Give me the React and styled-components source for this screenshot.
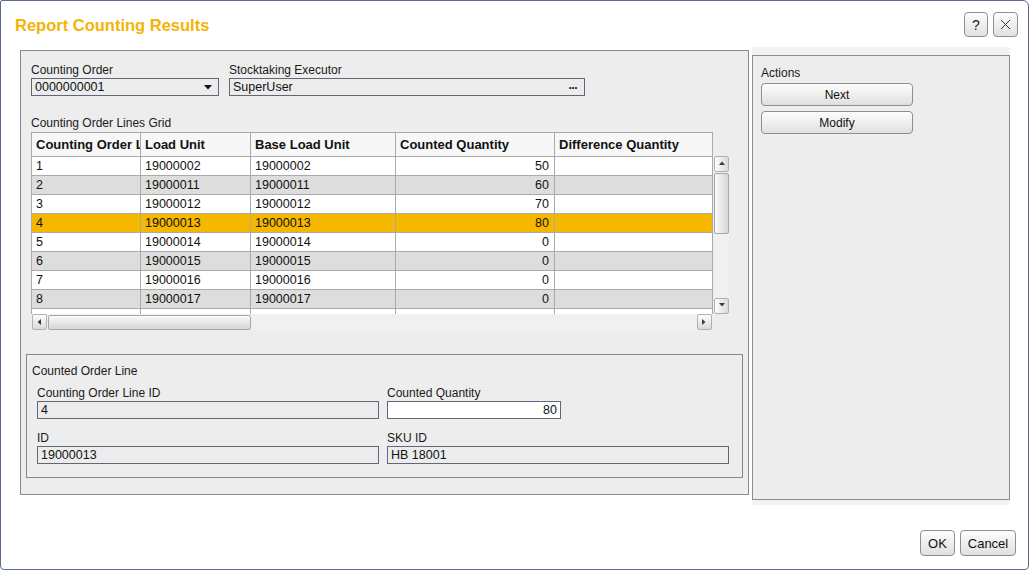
import React from 'react';
import styled, { createGlobalStyle } from 'styled-components';

const GlobalStyle = createGlobalStyle`
  html, body { margin: 0; padding: 0; background: #fff; }
  body {
    font-family: "Liberation Sans", Arial, sans-serif;
    font-size: 12px;
    color: #141414;
  }
  * { box-sizing: border-box; }
`;

// the 9th row is only a sliver in the viewport, so it holds no text
const rows = [
  { id: '1', lu: '19000002', base: '19000002', qty: '50' },
  { id: '2', lu: '19000011', base: '19000011', qty: '60' },
  { id: '3', lu: '19000012', base: '19000012', qty: '70' },
  { id: '4', lu: '19000013', base: '19000013', qty: '80', selected: true },
  { id: '5', lu: '19000014', base: '19000014', qty: '0' },
  { id: '6', lu: '19000015', base: '19000015', qty: '0' },
  { id: '7', lu: '19000016', base: '19000016', qty: '0' },
  { id: '8', lu: '19000017', base: '19000017', qty: '0' },
  { id: '' },
];

const columns = [
  { key: 'id', title: 'Counting Order Line ID', width: 109 },
  { key: 'lu', title: 'Load Unit', width: 110 },
  { key: 'base', title: 'Base Load Unit', width: 145 },
  { key: 'qty', title: 'Counted Quantity', width: 159, align: 'right' },
  { key: 'diff', title: 'Difference Quantity', width: 158 },
];

const Window = styled.div`
  width: 1029px;
  height: 570px;
  border: 1px solid #5b6b8a;
  border-radius: 2px 6px 4px 4px;
  background: #fff;
  display: flex;
  flex-direction: column;
`;

const TitleBar = styled.div`
  height: 46px;
  display: flex;
  align-items: center;
  justify-content: space-between;
  padding: 0 10px 0 14px;
`;

const Title = styled.h1`
  margin: 0;
  font-size: 16.5px;
  font-weight: bold;
  color: #f4b305;
  padding-top: 2px;
`;

const TitleButtons = styled.div`
  display: flex;
  gap: 5px;
  margin-top: 1px;
`;

const SmallButton = styled.button`
  width: ${(p) => p.$width || 24}px;
  height: 25px;
  padding: 0;
  border: 1px solid #8f8f8f;
  border-radius: 4px;
  background: linear-gradient(#fdfdfd, #e1e1e1);
  font-family: inherit;
  font-size: 14px;
  color: #222;
  display: flex;
  align-items: center;
  justify-content: center;
`;

const Body = styled.div`
  display: flex;
  align-items: flex-start;
  padding-left: 19px;
`;

const MainPanel = styled.div`
  margin-top: 3px;
  width: 729px;
  height: 445px;
  border: 1px solid #8c8c8c;
  background: #ededed;
  padding: 12px 5px 0 5px;
`;

const TopSection = styled.div`
  padding-left: 5px;
`;

const FieldRow = styled.div`
  display: flex;
  gap: 10px;
`;

const FieldBlock = styled.div`
  display: flex;
  flex-direction: column;
  width: ${(p) => p.$width || 'auto'};
`;

const Label = styled.div`
  font-size: 12px;
  line-height: 14px;
  color: #1a1a1a;
  margin-bottom: 1px;
  white-space: nowrap;
`;

const Field = styled.div`
  height: 18px;
  width: ${(p) => p.$width || '100%'};
  border: 1px solid #5f687a;
  background: ${(p) => (p.$editable ? '#fff' : '#ececec')};
  padding: 0 3px;
  line-height: 16px;
  font-size: 12.5px;
  color: #111;
  display: flex;
  align-items: center;
  justify-content: ${(p) => (p.$align === 'right' ? 'flex-end' : 'space-between')};
`;

const Dots = styled.span`
  font-weight: bold;
  font-size: 12px;
  letter-spacing: -0.5px;
  margin: -5px 4px 0 0;
`;

const GridLabel = styled(Label)`
  margin-top: 20px;
  margin-bottom: 2px;
`;

const GridFrame = styled.div`
  display: grid;
  grid-template-columns: 682px 16px;
  grid-template-rows: 25px 157px 16px;
`;

const HeaderRow = styled.div`
  display: flex;
  background: #f7f7f7;
  border-top: 1px solid #aaa;
  border-left: 1px solid #aaa;
`;

const HeaderCell = styled.div`
  flex: 0 0 ${(p) => p.$width}px;
  width: ${(p) => p.$width}px;
  border-right: 1px solid #aaa;
  border-bottom: 1px solid #aaa;
  padding: 1px 0 0 4px;
  font-size: 13px;
  font-weight: bold;
  line-height: 22px;
  color: #111;
  white-space: nowrap;
  overflow: hidden;
`;

const GridBody = styled.div`
  overflow: hidden;
  border-left: 1px solid #aaa;
  grid-column: 1;
  grid-row: 2;
`;

const rowBg = (p) => (p.$selected ? '#f5b700' : p.$odd ? '#dddddd' : '#fff');

const Row = styled.div`
  display: flex;
  height: 19px;
  flex-shrink: 0;
  background: ${rowBg};
  border-bottom: 1px solid #aaa;
`;

const Cell = styled.div`
  flex: 0 0 ${(p) => p.$width}px;
  width: ${(p) => p.$width}px;
  border-right: 1px solid #aaa;
  padding: 0 5px 0 4px;
  line-height: 19px;
  font-size: 12.5px;
  color: #111;
  text-align: ${(p) => p.$align || 'left'};
  white-space: nowrap;
  overflow: hidden;
`;

const VScroll = styled.div`
  grid-column: 2;
  grid-row: 2;
  margin: -1px 0 0 1px;
  width: 15px;
  background: #f0f0f0;
  display: flex;
  flex-direction: column;
`;

const HScroll = styled.div`
  grid-column: 1;
  grid-row: 3;
  background: #f0f0f0;
  display: flex;
  align-items: center;
  padding: 0 1px;
`;

const ScrollButton = styled.div`
  width: 15px;
  height: 16px;
  flex-shrink: 0;
  border: 1px solid #b0b0b0;
  border-radius: 2px;
  background: linear-gradient(${(p) => (p.$horizontal ? '180deg' : '90deg')}, #fdfdfd, #dadada);
  display: flex;
  align-items: center;
  justify-content: center;
`;

const VThumb = styled.div`
  height: 61px;
  margin-top: 1px;
  border: 1px solid #a8a8a8;
  border-radius: 2px;
  background: linear-gradient(90deg, #fafafa, #d6d6d6);
`;

const HThumb = styled.div`
  width: 203px;
  height: 15px;
  margin-left: 1px;
  border: 1px solid #a8a8a8;
  border-radius: 2px;
  background: linear-gradient(#fafafa, #d6d6d6);
`;

const Spacer = styled.div`
  flex: 1;
`;

const GroupBox = styled.div`
  margin-top: 24px;
  border: 1px solid #888;
  padding: 9px 5px 13px 5px;
`;

const GroupTitle = styled(Label)`
  margin-bottom: 8px;
`;

const FormGrid = styled.div`
  display: grid;
  grid-template-columns: 342px 342px;
  column-gap: 8px;
  row-gap: 12px;
  padding-left: 5px;
`;

const RightCol = styled.div`
  margin-left: 3px;
  width: 258px;
  background: #f3f3f3;
  padding: 8px 0 5px 0;
`;

const ActionsBox = styled.div`
  height: 445px;
  border: 1px solid #8c8c8c;
  background: #ededed;
  padding: 10px 8px;
  display: flex;
  flex-direction: column;
  gap: 5px;
`;

const ActionsTitle = styled(Label)`
  margin-bottom: -2px;
`;

const ActionButton = styled.button`
  width: 152px;
  height: 23px;
  border: 1px solid #8f8f8f;
  border-radius: 4px;
  background: linear-gradient(#fdfdfd, #e0e0e0);
  font-family: inherit;
  font-size: 12px;
  color: #111;
  padding: 0;
`;

const Footer = styled.div`
  margin-top: auto;
  display: flex;
  justify-content: flex-end;
  gap: 5px;
  padding: 0 12px 13px 0;
`;

const DialogButton = styled.button`
  height: 26px;
  width: ${(p) => p.$width}px;
  padding: 0;
  border: 1px solid #8f8f8f;
  border-radius: 4px;
  background: linear-gradient(#fdfdfd, #e0e0e0);
  font-family: inherit;
  font-size: 13px;
  color: #111;
`;

const Arrow = ({ dir }) => {
  const pts = {
    up: '1,5 4,1.5 7,5',
    down: '1,1 4,4.5 7,1',
    left: '5,1 1.5,4 5,7',
    right: '1,1 4.5,4 1,7',
  }[dir];
  return (
    <svg width="8" height="8" viewBox="0 0 8 8">
      <polygon points={pts} fill="#3a3a3a" />
    </svg>
  );
};

const DropArrow = () => (
  <svg width="8" height="5" viewBox="0 0 8 5" style={{ marginRight: 3 }}>
    <polygon points="0,0 8,0 4,4.5" fill="#111" />
  </svg>
);

export default function App() {
  return (
    <>
      <GlobalStyle />
      <Window>
        <TitleBar>
          <Title>Report Counting Results</Title>
          <TitleButtons>
            <SmallButton $width={24}>?</SmallButton>
            <SmallButton $width={25}>
              <svg width="11" height="11" viewBox="0 0 11 11">
                <path d="M1 1 L10 10 M10 1 L1 10" stroke="#333" strokeWidth="1" />
              </svg>
            </SmallButton>
          </TitleButtons>
        </TitleBar>

        <Body>
          <MainPanel>
            <TopSection>
              <FieldRow>
                <FieldBlock $width="188px">
                  <Label>Counting Order</Label>
                  <Field>
                    <span>0000000001</span>
                    <DropArrow />
                  </Field>
                </FieldBlock>
                <FieldBlock $width="356px">
                  <Label>Stocktaking Executor</Label>
                  <Field>
                    <span>SuperUser</span>
                    <Dots>...</Dots>
                  </Field>
                </FieldBlock>
              </FieldRow>

              <GridLabel>Counting Order Lines Grid</GridLabel>
              <GridFrame>
                <HeaderRow>
                  {columns.map((c) => (
                    <HeaderCell key={c.key} $width={c.width}>
                      {c.title}
                    </HeaderCell>
                  ))}
                </HeaderRow>
                <div />
                <GridBody>
                  {rows.map((r, i) => (
                    <Row key={i} $odd={i % 2 === 1} $selected={r.selected}>
                      {columns.map((c) => (
                        <Cell key={c.key} $width={c.width} $align={c.align}>
                          {r[c.key] || ''}
                        </Cell>
                      ))}
                    </Row>
                  ))}
                </GridBody>
                <VScroll>
                  <ScrollButton>
                    <Arrow dir="up" />
                  </ScrollButton>
                  <VThumb />
                  <Spacer />
                  <ScrollButton>
                    <Arrow dir="down" />
                  </ScrollButton>
                </VScroll>
                <HScroll>
                  <ScrollButton $horizontal>
                    <Arrow dir="left" />
                  </ScrollButton>
                  <HThumb />
                  <Spacer />
                  <ScrollButton $horizontal>
                    <Arrow dir="right" />
                  </ScrollButton>
                </HScroll>
              </GridFrame>
            </TopSection>

            <GroupBox>
              <GroupTitle>Counted Order Line</GroupTitle>
              <FormGrid>
                <FieldBlock>
                  <Label>Counting Order Line ID</Label>
                  <Field>4</Field>
                </FieldBlock>
                <FieldBlock>
                  <Label>Counted Quantity</Label>
                  <Field $width="174px" $editable $align="right">80</Field>
                </FieldBlock>
                <FieldBlock>
                  <Label>ID</Label>
                  <Field>19000013</Field>
                </FieldBlock>
                <FieldBlock>
                  <Label>SKU ID</Label>
                  <Field>HB 18001</Field>
                </FieldBlock>
              </FormGrid>
            </GroupBox>
          </MainPanel>

          <RightCol>
            <ActionsBox>
              <ActionsTitle>Actions</ActionsTitle>
              <ActionButton>Next</ActionButton>
              <ActionButton>Modify</ActionButton>
            </ActionsBox>
          </RightCol>
        </Body>

        <Footer>
          <DialogButton $width={35}>OK</DialogButton>
          <DialogButton $width={56}>Cancel</DialogButton>
        </Footer>
      </Window>
    </>
  );
}
